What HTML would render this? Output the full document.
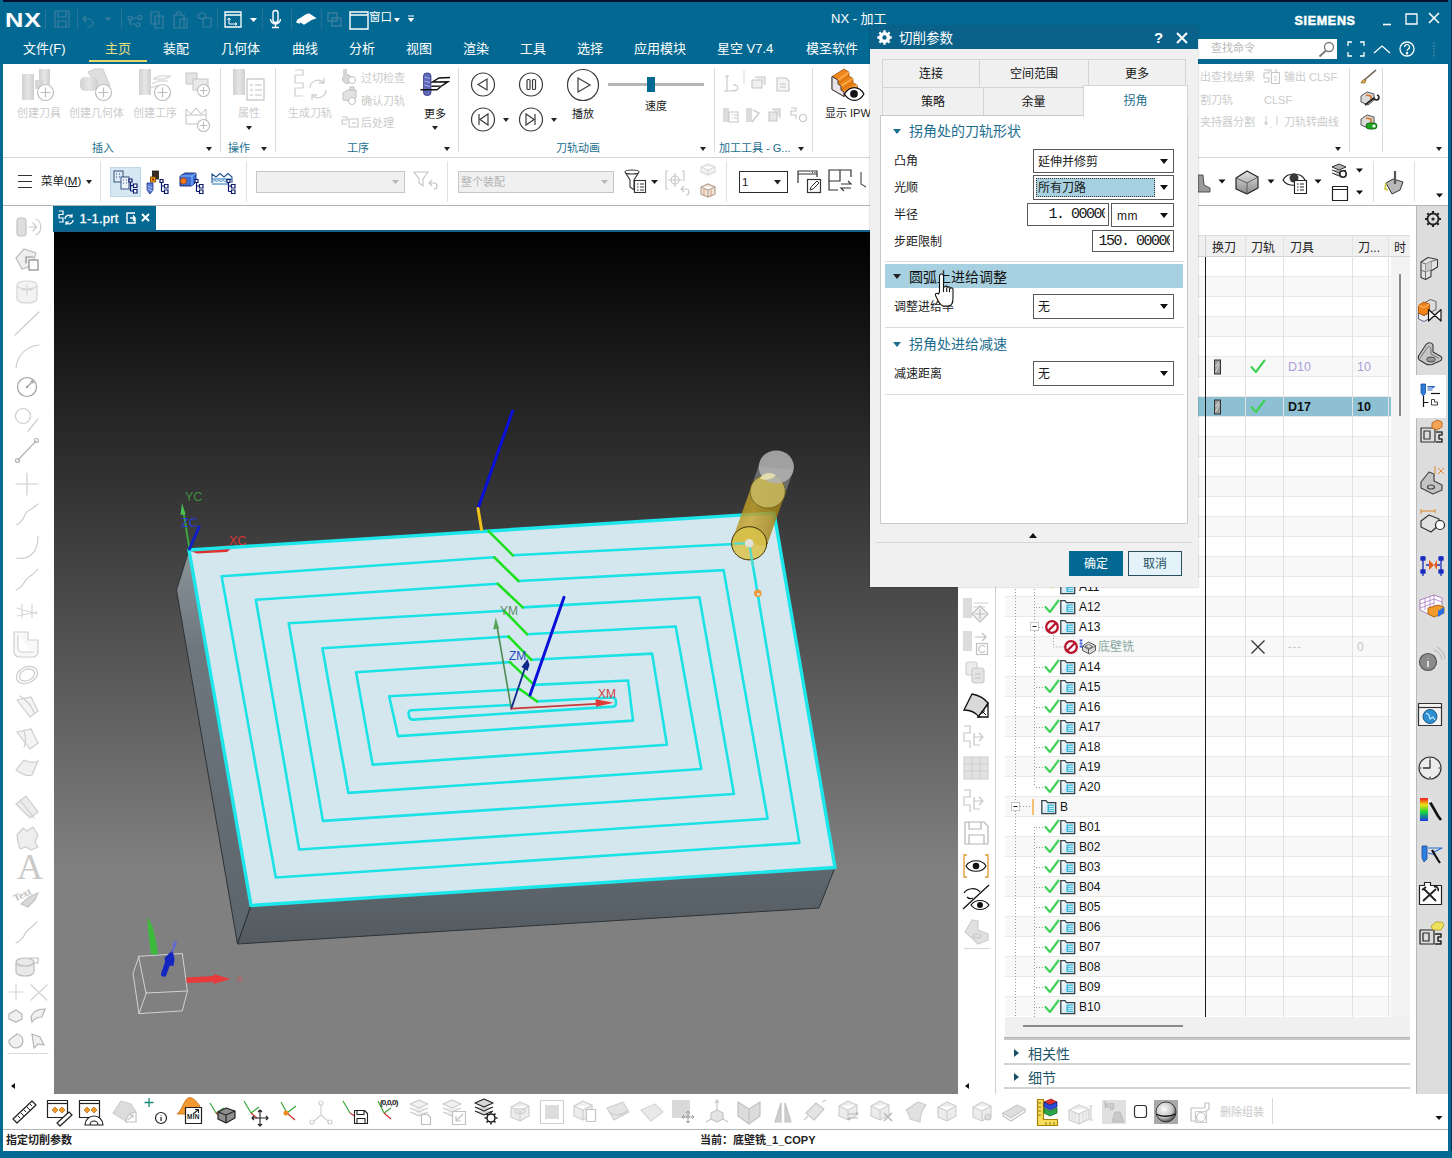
<!DOCTYPE html>
<html lang="zh-CN">
<head>
<meta charset="utf-8">
<title>NX - 加工</title>
<style>
*{box-sizing:border-box;margin:0;padding:0}
html,body{width:1452px;height:1158px;overflow:hidden;background:#fff}
body{position:relative;font-family:"Liberation Sans","Noto Sans CJK SC",sans-serif;font-size:12px;color:#1a1a1a}
.a{position:absolute}
.t{position:absolute;white-space:nowrap;line-height:1}
svg{position:absolute;overflow:visible}
.teal{background:#036993}
.w{color:#fff}
.dis{color:#cbcbcb}
.grp{color:#1b6e8e;font-size:12px}
.vs{position:absolute;width:1px;background:#dcdcdc}
.hs{position:absolute;height:1px;background:#d9d9d9}
.arr{position:absolute;width:0;height:0;border-left:3.5px solid transparent;border-right:3.5px solid transparent;border-top:4px solid #222}
#dlg{font-size:12px}
#dlg .tab{background:#f0f0f0;border:1px solid #d4d4d4;text-align:center;line-height:29px;font-size:12px;color:#111}
#dlg .tri{position:absolute;width:0;height:0;border-left:4.500px solid transparent;border-right:4.500px solid transparent;border-top:5px solid #1b6e8e}
#dlg .cb{background:#fff;border:1px solid #5a5a5a}
#dlg .cb span{position:absolute;top:6px;line-height:1;white-space:nowrap;font-size:12px}
#dlg .cb i{position:absolute;right:5px;top:9px;width:0;height:0;border-left:4px solid transparent;border-right:4px solid transparent;border-top:5px solid #111}
#dlg .cb b{position:absolute;left:2px;top:2px;width:119px;height:19px;background:#a7d0e0;outline:1px dotted #333;outline-offset:-1px}
#dlg .cb .num{font-family:"Liberation Mono","Noto Sans CJK SC",monospace;font-size:15px;top:3px;letter-spacing:-1.500px}
#dlg .cb .num u{text-decoration:none;display:inline-block;width:4px;overflow:hidden;vertical-align:top}
</style>
</head>
<body>
<!-- window frame -->
<div class="a teal" style="left:0;top:0;width:1452px;height:64px"></div>
<div class="a" style="left:0;top:0;width:1452px;height:1.500px;background:#04102e"></div>
<div class="a teal" style="left:0;top:0;width:3px;height:1158px"></div>
<div class="a teal" style="left:1448px;top:0;width:4px;height:1158px"></div>
<div class="a" style="left:1451px;top:0;width:1px;height:1158px;background:#0a3358"></div>
<div class="a teal" style="left:0;top:1151px;width:1452px;height:7px"></div>

<!-- title row -->
<div class="t w" style="left:5.300px;top:9px;font-size:21px;font-weight:bold;letter-spacing:.5px;transform:scaleX(1.21);transform-origin:left center">NX</div>
<div class="a" style="left:45px;top:9px;width:1px;height:20px;background:#2a7397"></div>
<svg style="left:50px;top:8px" width="400" height="26" viewBox="0 0 400 26" fill="none" stroke="#3d7f9f" stroke-width="1.2">
  <path d="M5 3h14v16H5zM8 3v6h8V3M8 19v-6h8v6"/>
  <path d="M36 8l-3 3 3 3M33 11h6a4 4 0 0 1 0 8h-2"/>
  <path d="M56 10l2 2 2-2z" fill="#3d7f9f"/>
  <path d="M78 10a2 2 0 1 0 4 0a2 2 0 1 0-4 0M82 10h6a2 2 0 1 0 0-1M80 12v4h6a2 2 0 1 0 1-1"/>
  <path d="M101 4h8v12h-8zM105 8h8v12h-8z"/>
  <path d="M124 7h10v13h-10zM127 7V4h4v3M130 11h7v9h-7z"/>
  <path d="M148 8a4 3 0 1 0 8 0a4 3 0 1 0-8 0M153 10h8v9h-8z"/>
</svg>
<div class="a" style="left:77px;top:9px;width:1px;height:20px;background:#2a7397"></div>
<div class="a" style="left:121px;top:9px;width:1px;height:20px;background:#2a7397"></div>
<div class="a" style="left:217px;top:9px;width:1px;height:20px;background:#2a7397"></div>
<div class="a" style="left:262px;top:9px;width:1px;height:20px;background:#2a7397"></div>
<div class="a" style="left:291px;top:9px;width:1px;height:20px;background:#2a7397"></div>
<div class="a" style="left:321px;top:9px;width:1px;height:20px;background:#2a7397"></div>
<svg style="left:222px;top:8px" width="200" height="26" viewBox="0 0 200 26" fill="none" stroke="#fff" stroke-width="1.3">
  <path d="M3 4h16v15H3zM3 7h16"/>
  <path d="M7 10v6h8M7 10l-1.5 2M7 10l1.500 2M15 16l-2-1.500M15 16l-2 1.500" stroke-width="1"/>
  <path d="M28 10l3.500 4 3.500-4z" fill="#fff" stroke="none"/>
  <path d="M51 5a2.500 2.500 0 0 1 5 0v7a2.500 2.500 0 0 1-5 0zM48.500 11a5 5 0 0 0 10 0M53.500 16v3.500M50 19.500h7" stroke-width="1.4"/>
  <path d="M76 12l8-5 6 4-8 5zM84 7l3-1 6 4-3 1M76 12l-1 2 3 1" stroke-width="1.4" fill="#fff"/>
  <path d="M106 5h9v8h-9zM110 10h9v8h-9z" stroke="#3d7f9f"/>
  <path d="M128 4h18v17h-18zM128 7h18" stroke-width="1.4"/>
  <path d="M172 10l3 4 3-4z" fill="#fff" stroke="none"/>
  <path d="M186 8h6M186.500 10.500l2.500 3 2.500-3z" fill="#fff" stroke-width="1"/>
</svg>
<div class="t w" style="left:369px;top:12px;font-size:11.500px">窗口</div>
<div class="t w" style="left:831px;top:12px;font-size:13px">NX - 加工</div>
<div class="t w" style="left:1294.500px;top:15px;font-size:12.500px;font-weight:bold;letter-spacing:0.700px;-webkit-text-stroke:0.5px #fff">SIEMENS</div>
<svg style="left:1380px;top:8px" width="60" height="22" viewBox="0 0 60 22" fill="none" stroke="#fff" stroke-width="1.6">
  <path d="M3 16.500h8"/>
  <path d="M26 6h11v10H26z" stroke-width="1.3"/>
  <path d="M49 5l10 10M59 5l-10 10"/>
</svg>

<!-- menu row -->
<div class="t w" style="left:23px;top:42px;font-size:13px">文件(F)</div>
<div class="t" style="left:105px;top:42px;font-size:13px;color:#e9df7c">主页</div>
<div class="a" style="left:89px;top:60px;width:58px;height:2px;background:#e3d76a"></div>
<div class="t w" style="left:163px;top:42px;font-size:13px">装配</div>
<div class="t w" style="left:221px;top:42px;font-size:13px">几何体</div>
<div class="t w" style="left:292px;top:42px;font-size:13px">曲线</div>
<div class="t w" style="left:349px;top:42px;font-size:13px">分析</div>
<div class="t w" style="left:406px;top:42px;font-size:13px">视图</div>
<div class="t w" style="left:463px;top:42px;font-size:13px">渲染</div>
<div class="t w" style="left:520px;top:42px;font-size:13px">工具</div>
<div class="t w" style="left:577px;top:42px;font-size:13px">选择</div>
<div class="t w" style="left:634px;top:42px;font-size:13px">应用模块</div>
<div class="t w" style="left:717px;top:42px;font-size:13px">星空 V7.4</div>
<div class="t w" style="left:806px;top:42px;font-size:13px">模圣软件</div>

<!-- search box + right icons -->
<div class="a" style="left:1197px;top:39px;width:140px;height:20px;background:#fff"></div>
<div class="t" style="left:1211px;top:43px;font-size:11px;color:#b9b9b9">查找命令</div>
<svg style="left:1316px;top:40px" width="130" height="20" viewBox="0 0 130 20" fill="none" stroke="#fff" stroke-width="1.3">
  <circle cx="13" cy="7" r="4.500" stroke="#777"/><path d="M10 10.500L3.500 16.500" stroke="#777" stroke-width="1.8"/>
  <path d="M32 6V2h4M44 2h4v4M48 12v4h-4M36 16h-4v-4"/>
  <path d="M58 13l8-7 8 7"/>
  <circle cx="91" cy="9" r="7"/><path d="M88.500 7a2.500 2.500 0 1 1 3.500 2.300c-1 .5-1 1-1 2" stroke-width="1.2"/><circle cx="91" cy="13.300" r=".6" fill="#fff"/>
  <path d="M118 2v16" stroke="#2d789c" stroke-width="2" stroke-dasharray="2 1"/>
</svg>
<!-- ribbon -->
<div class="hs" style="left:3px;top:157px;width:1445px;background:#d4d4d4"></div>
<svg style="left:0;top:64px" width="870" height="94" viewBox="0 64 870 94" fill="none" stroke="#c9c9c9" stroke-width="1">
  <defs>
    <linearGradient id="gd" x1="0" x2="1"><stop offset="0" stop-color="#d0d0d0"/><stop offset=".5" stop-color="#e6e6e6"/><stop offset="1" stop-color="#cfcfcf"/></linearGradient>
    <g id="plus"><circle r="8" fill="#fff" stroke="#bdbdbd" stroke-width="1.2"/><path d="M-5 0h10M0-5v10" stroke="#bdbdbd" stroke-width="1.2"/></g>
    <g id="plusS"><circle r="6" fill="#fff" stroke="#bdbdbd" stroke-width="1.1"/><path d="M-3.500 0h7M0-3.500v7" stroke="#bdbdbd" stroke-width="1.100"/></g>
  </defs>
  <!-- 创建刀具 -->
  <rect x="39" y="69" width="11" height="20" fill="url(#gd)" stroke="none"/>
  <rect x="35" y="80" width="8" height="9" fill="#d6d6d6" stroke="none"/>
  <rect x="22" y="74" width="12" height="26" rx="1" fill="url(#gd)" stroke="none"/>
  <use href="#plus" x="45.500" y="92.500"/>
  <!-- 创建几何体 -->
  <path d="M95 69l8 0 7 17-8 8-14-22z" fill="#dedede" stroke="#cfcfcf"/>
  <rect x="80" y="77" width="18" height="14" rx="5" fill="url(#gd)" stroke="none"/>
  <use href="#plus" x="103.500" y="92.500"/>
  <!-- 创建工序 -->
  <rect x="139" y="69" width="12" height="26" rx="1" fill="url(#gd)" stroke="none"/>
  <path d="M153 79l6-3h12l-6 3zM152 84l6-3h10M151 88l5-2h8" stroke="#cdcdcd"/>
  <use href="#plus" x="162.500" y="92.500"/>
  <!-- small two -->
  <rect x="186" y="73" width="11" height="11" fill="#e4e4e4" stroke="#c6c6c6"/><rect x="193" y="79" width="15" height="11" fill="#e9e9e9" stroke="#c6c6c6"/>
  <use href="#plusS" x="203.500" y="90.500"/>
  <path d="M186 124v-15l5 5 5-6 5 6 5-5v15M186 115h20M186 124h14" stroke="#c2c2c2"/>
  <use href="#plusS" x="203.500" y="125.500"/>
  <!-- 属性 -->
  <rect x="233" y="69" width="12" height="26" rx="1" fill="url(#gd)" stroke="none"/>
  <rect x="247" y="79" width="17" height="21" fill="#fff" stroke="#c2c2c2" stroke-width="1.2"/>
  <path d="M250 85h3M255 85h7M250 90h3M255 90h7M250 95h3M255 95h7" stroke="#c2c2c2" stroke-width="1.2"/>
  <!-- 生成刀轨 -->
  <path d="M295 70h8v5h-8v8h8v5h-8v8h8" stroke="#cfcfcf" stroke-width="1.200"/>
  <path d="M310 88a8 8 0 0 1 14-5M326 90a8 8 0 0 1-14 5M324 78v5h-5M312 100v-5h5" stroke="#cfcfcf" stroke-width="1.300"/>
  <!-- small three -->
  <circle cx="347" cy="79" r="4.500" fill="#dadada" stroke="#c4c4c4"/><rect x="343" y="69" width="4" height="8" fill="#d5d5d5" stroke="none"/><circle cx="352" cy="80" r="3.500" fill="#fff" stroke="#c0c0c0"/>
  <path d="M343 100v-7l5-3h8v8l-4 3zM350 91v-4h4v4" fill="#e2e2e2" stroke="#c0c0c0"/><circle cx="352" cy="101" r="3.500" fill="#fff" stroke="#c0c0c0"/>
  <path d="M342 117h5v3h-5v4h5M349 119h9v8h-9zM352 123h4" stroke="#c6c6c6" stroke-width="1.100"/>
  <!-- 更多 icon -->
  <rect x="423.500" y="73" width="7.500" height="22.500" rx="3" fill="#6068b8" stroke="#2a2f7c" stroke-width=".7"/>
  <path d="M424.500 77l5.500 1.500M424.500 81l5.500 1.500M424.500 85l5.500 1.500M424.500 89l5.500 1.500" stroke="#a8aee8" stroke-width="1"/>
  <path d="M450 77.500L439 78L432.500 82L448 81.700L441.500 86L431.500 86.200M420.500 89.700L437 89.700L441.500 86" stroke="#111" stroke-width="1.400" fill="none" stroke-linejoin="miter"/>
  <!-- animation buttons -->
  <g stroke="#3c3c3c" stroke-width="1.200" fill="#fff">
    <circle cx="483" cy="84.500" r="11.500"/><path d="M487 79v11l-9-5.500z"/>
    <circle cx="531" cy="84.500" r="11.500"/><rect x="527" y="79.500" width="3" height="10" rx="1"/><rect x="532.500" y="79.500" width="3" height="10" rx="1"/>
    <circle cx="583" cy="85" r="15.500"/><path d="M578 78v14l12-7z"/>
    <circle cx="483" cy="119.500" r="11.500"/><path d="M488 114v11l-8-5.500zM479 114v11"/>
    <circle cx="531" cy="119.500" r="11.500"/><path d="M526 114v11l8-5.500zM535 114v11"/>
  </g>
  <rect x="608" y="83" width="96" height="3" fill="#b5b5b5" stroke="none"/>
  <rect x="647" y="77" width="8" height="15" fill="#036993" stroke="none"/>
  <!-- 加工工具 icons -->
  <g stroke="#c6c6c6" stroke-width="1.1">
    <path d="M725 76h4M727 76v15M724 91h7M731 90a4 3 0 1 0 2-5"/>
    <path d="M744 70v14" stroke="#dcdcdc"/>
    <path d="M752 80h10v8h-10zM755 77h10v8" fill="#f0f0f0"/>
    <path d="M777 78h9l3 3v10h-12zM780 84h6M780 87h6" fill="#f4f4f4"/>
    <rect x="723" y="108" width="6" height="14" fill="#dcdcdc" stroke="none"/><path d="M729 112h9v10h-9zM732 115h1M734 115h3M732 118h1M734 118h3" />
    <rect x="746" y="108" width="6" height="14" fill="#dcdcdc" stroke="none"/><path d="M753 110l6 3-7 9" stroke-width="1.600" stroke="#cfcfcf"/>
    <path d="M769 112h8v9h-8zM772 109h8v9" fill="#e6e6e6"/>
    <path d="M791 108h5v3h-5v4h5v4"/><circle cx="803" cy="118" r="3.500"/>
  </g>
  <!-- 显示 IPW icon -->
  <path d="M832 76.500L844 69l5 3v4l4 2.500v4l4.500 3v3L844 96.500L832 89.500z" fill="#ee861a" stroke="#7a3a00" stroke-width=".6"/>
  <path d="M832 76.500l6 3.500v4l3 2v4l3 2v4.500L832 89.500z" fill="#e9e2e6" stroke="#222" stroke-width=".9"/>
  <path d="M838 80l11-8M841 86l12-7.500M844 92l13.500-6.500" stroke="#ffb257" stroke-width="1.400"/>
  <path d="M838 84l11-8M841 90l12-7.500" stroke="#c96a0a" stroke-width="1"/>
  <path d="M844.400 94c5-8.500 15-8.500 19.500 0-4.500 8.500-14.500 8.500-19.500 0z" fill="#fff" stroke="#111" stroke-width="1.300"/><circle cx="854" cy="93.800" r="3.900" fill="#14141a" stroke="none"/>
</svg>
<div class="t dis" style="left:17px;top:108px;font-size:11px">创建刀具</div>
<div class="t dis" style="left:69px;top:108px;font-size:11px">创建几何体</div>
<div class="t dis" style="left:133px;top:108px;font-size:11px">创建工序</div>
<div class="t dis" style="left:238px;top:108px;font-size:11px">属性</div>
<div class="t dis" style="left:288px;top:108px;font-size:11px">生成刀轨</div>
<div class="t dis" style="left:361px;top:73px;font-size:11px">过切检查</div>
<div class="t dis" style="left:361px;top:96px;font-size:11px">确认刀轨</div>
<div class="t dis" style="left:361px;top:118px;font-size:11px">后处理</div>
<div class="t" style="left:424px;top:109px;font-size:11px">更多</div>
<div class="t" style="left:572px;top:109px;font-size:11px">播放</div>
<div class="t" style="left:645px;top:101px;font-size:11px">速度</div>
<div class="t" style="left:825px;top:108px;font-size:11px">显示 IPW</div>
<div class="t grp" style="left:92px;top:142.500px;font-size:11px">插入</div>
<div class="t grp" style="left:228px;top:142.500px;font-size:11px">操作</div>
<div class="t grp" style="left:347px;top:142.500px;font-size:11px">工序</div>
<div class="t grp" style="left:556px;top:142.500px;font-size:11px">刀轨动画</div>
<div class="t grp" style="left:719px;top:142.500px;font-size:11px">加工工具 - G...</div>
<div class="arr" style="left:206px;top:147px"></div>
<div class="arr" style="left:261px;top:147px"></div>
<div class="arr" style="left:444px;top:147px"></div>
<div class="arr" style="left:700px;top:147px"></div>
<div class="arr" style="left:798px;top:147px"></div>
<div class="arr" style="left:246px;top:126px"></div>
<div class="arr" style="left:432px;top:126px"></div>
<div class="arr" style="left:503px;top:118px"></div>
<div class="arr" style="left:551px;top:118px"></div>
<div class="vs" style="left:220px;top:68px;height:84px"></div>
<div class="vs" style="left:275px;top:68px;height:84px"></div>
<div class="vs" style="left:458px;top:68px;height:84px"></div>
<div class="vs" style="left:714px;top:68px;height:84px"></div>
<div class="vs" style="left:812px;top:68px;height:84px"></div>
<!-- toolbar row 2 -->
<div class="hs" style="left:3px;top:205px;width:1445px;background:#b4b4b4"></div>
<svg style="left:0;top:158px" width="870" height="47" viewBox="0 158 870 47" fill="none" stroke="#222" stroke-width="1.200">
  <path d="M18 175.500h14M18 181.500h14M18 187.500h14" stroke="#333" stroke-width="1.100"/>
  <rect x="110.500" y="167.500" width="30" height="29" fill="#d5e7f2" stroke="#bcd8e7" stroke-width="1"/>
  <defs>
    <g id="tree3"><path d="M0 0h3v3h-3zM1.500 3v9M1.500 6.500h3M4.500 5h3.500v3.500h-3.500zM1.500 12h3M4.500 10.500h3.500v3.500h-3.500z" stroke="#0b1a6a" stroke-width="1.200" fill="#fff"/></g>
  </defs>
  <!-- prog order -->
  <rect x="114" y="171" width="9" height="11" fill="#dfe8f5" stroke="#33507e" stroke-width="1"/>
  <path d="M116 174h1M119 174h1M116 177h1M119 177h1" stroke="#33507e"/>
  <rect x="121" y="177" width="8" height="12" fill="#eef3fb" stroke="#33507e" stroke-width="1"/>
  <path d="M123 180h1M126 180h1M123 183h1M126 183h1" stroke="#33507e"/>
  <use href="#tree3" x="129" y="179"/>
  <!-- machine tool -->
  <rect x="152.500" y="171" width="6" height="8" fill="#3a2a22" stroke="#1a1a1a" stroke-width=".8"/>
  <rect x="150.500" y="177" width="5" height="5" fill="#f6a200" stroke="#7a3d00" stroke-width=".8"/><circle cx="153" cy="179.500" r="1" fill="#7a1010" stroke="none"/>
  <path d="M147 183h6v7l-3 4-3-4z" fill="#5a7fd8" stroke="#1d2f80" stroke-width=".8"/><path d="M147.500 186l5 2M147.500 189l5 2" stroke="#b8c8f8" stroke-width=".8"/>
  <use href="#tree3" x="160" y="179.500"/>
  <!-- geometry -->
  <path d="M180 176l5-3h11v9l-4 4h-12z" fill="#3d70d6" stroke="#12226a" stroke-width=".9"/>
  <path d="M180 176h12l4-3M192 176v10" stroke="#9cc1ff" stroke-width=".9"/>
  <circle cx="183.500" cy="181" r="3" fill="#ff7a1a" stroke="#a43a00" stroke-width=".8"/>
  <use href="#tree3" x="195" y="179.500"/>
  <!-- method -->
  <path d="M212 183v-9l4 3 4-3.500 4 3.500 4-3.500 4 3.500v6" stroke="#20508d" stroke-width="1.100"/>
  <path d="M212 179h20M212 184h16" stroke="#1d6fb8" stroke-width="1.200"/>
  <path d="M213 181.500l2-1 2 1 2-1 2 1 2-1 2 1 2-1 2 1" stroke="#1d6fb8" stroke-width=".8"/>
  <use href="#tree3" x="227" y="179.500"/>
  <!-- combos -->
  <rect x="256.500" y="171.500" width="148" height="21" fill="#f0f0f0" stroke="#c6c6c6" stroke-width="1"/>
  <path d="M392 180l3.500 4 3.500-4z" fill="#b5b5b5" stroke="none"/>
  <path d="M414 172h14l-5 7v7l-4-3v-4zM432 180l-3 3 3 3M429 183h5a3 3 0 0 1 0 6" stroke="#c3c3c3" stroke-width="1.100"/>
  <rect x="458.500" y="171.500" width="155" height="21" fill="#f0f0f0" stroke="#c6c6c6" stroke-width="1"/>
  <path d="M601 180l3.500 4 3.500-4z" fill="#b5b5b5" stroke="none"/>
  <!-- filter icon -->
  <path d="M625 172a7 2 0 1 0 14 0a7 2 0 1 0-14 0M625 172l5 8v7l4 3v-10l5-8" stroke="#333" stroke-width="1.100" fill="#fff"/>
  <rect x="634.500" y="180.500" width="11" height="12" fill="#fff" stroke="#333" stroke-width="1.100"/>
  <path d="M637 184h1.500M640 184h4M637 187h1.500M640 187h4M637 190h1.500M640 190h4" stroke="#333" stroke-width="1.100"/>
  <path d="M651 180l3.500 4 3.500-4z" fill="#222" stroke="none"/>
  <!-- snap icon -->
  <path d="M668 171h-2v18h2M682 171h2v10" stroke="#c9c9c9"/><circle cx="675" cy="180" r="4" stroke="#c9c9c9"/><path d="M675 173v14M668 180h14" stroke="#c9c9c9"/>
  <path d="M684 186l-3 3 3 3M681 189h5a3 3 0 0 1 0 6" stroke="#c9c9c9"/>
  <path d="M701 167l7-3 7 3v5l-7 3-7-3zM701 167l7 3 7-3M708 170v5" stroke="#dcdcdc" fill="#f1f1f1"/>
  <path d="M701 187l7-3 7 3v7l-7 3-7-3zM701 187l7 3 7-3M708 190v7" stroke="#b9a492" fill="#f0e6dc"/>
  <path d="M704 189v7M711 190v6" stroke="#d38a5a" stroke-width=".8"/>
  <!-- combo 1 -->
  <rect x="739.500" y="171.500" width="48" height="21" fill="#fff" stroke="#2b2b2b" stroke-width="1"/>
  <path d="M774 180l3.500 4.500 3.500-4.500z" fill="#222" stroke="none"/>
  <!-- two window icons -->
  <path d="M798 183v-12h19v6M798 174h19" stroke="#333"/><path d="M812 172.500h1M814.500 172.500h1" stroke="#333"/>
  <rect x="807.500" y="179.500" width="13" height="13" fill="#fff" stroke="#333"/><path d="M810 190l1-3 6-6 2 2-6 6z" fill="#fff" stroke="#333" stroke-width="1"/>
  <path d="M829 170h11v11h-11zM840 170h11v7M829 181v9h9M840 177v4" stroke="#333"/>
  <path d="M841 184h10l-3-3M851 188h-10l3 3" stroke="#333"/>
  <path d="M861 172v12l5 3" stroke="#555"/>
</svg>
<div class="t" style="left:41px;top:176px;font-size:11.500px">菜单(<span style="text-decoration:underline">M</span>)</div>
<div class="arr" style="left:86px;top:180px"></div>
<div class="t" style="left:461px;top:177px;font-size:11px;color:#b4b4b4">整个装配</div>
<div class="t" style="left:742px;top:177px;font-size:11.500px">1</div>
<div class="vs" style="left:100px;top:161px;height:41px;background:#e0e0e0"></div>
<div class="vs" style="left:246px;top:161px;height:41px;background:#e0e0e0"></div>
<div class="vs" style="left:447px;top:161px;height:41px;background:#e0e0e0"></div>
<div class="vs" style="left:726px;top:161px;height:41px;background:#e0e0e0"></div>

<!-- tab row -->
<div class="a teal" style="left:53px;top:206px;width:103px;height:26px"></div>
<div class="a teal" style="left:53px;top:230px;width:905px;height:2px;background:#15608a"></div>
<svg style="left:56px;top:208px" width="100" height="20" viewBox="0 0 100 20" fill="none" stroke="#fff" stroke-width="1.200">
  <path d="M3 3h4v3.500H3V10h4v4H3"/>
  <path d="M9 11a4 4 0 0 1 7-2.500M17 12a4 4 0 0 1-7 2.500M16 6v3h-3M10 17v-3h3" stroke-width="1.200"/>
  <path d="M76 5h-5v10h8v-4M74 10h5l-2-2.500M79 10l-2 2.500M75 5h4" stroke-width="1.400"/>
  <path d="M86 6l7 7M93 6l-7 7" stroke-width="2"/>
</svg>
<div class="t w" style="left:79.500px;top:211.500px;font-size:13px;-webkit-text-stroke:.3px #fff;letter-spacing:.2px">1-1.prt</div>
<!-- right part of ribbon / toolbar (beyond dialog) -->
<div class="t dis" style="left:1200px;top:72px;font-size:11px">出查找结果</div>
<div class="t dis" style="left:1200px;top:95px;font-size:11px">割刀轨</div>
<div class="t dis" style="left:1200px;top:117px;font-size:11px">夹持器分割</div>
<div class="t dis" style="left:1284px;top:72px;font-size:11px">输出 CLSF</div>
<div class="t dis" style="left:1264px;top:95px;font-size:11px">CLSF</div>
<div class="t dis" style="left:1284px;top:117px;font-size:11px">刀轨转曲线</div>
<div class="vs" style="left:1349px;top:68px;height:84px"></div>
<div class="vs" style="left:1382px;top:68px;height:84px"></div>
<div class="arr" style="left:1335px;top:147px"></div>
<div class="arr" style="left:1436px;top:147px"></div>
<svg style="left:1197px;top:64px" width="251" height="142" viewBox="1197 64 251 142" fill="none" stroke="#c6c6c6" stroke-width="1.100" stroke-linejoin="round">
  <path d="M1264 70h5v3h-5v5h5v4h-5M1271 72v-3M1276 72v-3M1271.500 72.500h8v11h-8zM1274 77h3M1274 80h3" />
  <path d="M1266 116v9l-1.500-3M1266 125l1.500-3M1277 116v9M1271 127v1" stroke="#cfcfcf"/>
  <!-- 3 color icons -->
  <path d="M1362 82l14-12" stroke="#6a5a4a" stroke-width="1.600"/><path d="M1361 83c1-3 3-4 5-3l-1 3z" fill="#d8a850" stroke="#8a6a20" stroke-width=".7"/>
  <path d="M1361 96l6-4 7 2v6l-6 5-7-3z" fill="#d9d9d9" stroke="#444" stroke-width=".9"/><path d="M1366 95l5 1v4" stroke="#d8742a" stroke-width="1.600"/><path d="M1365 105l9-7a2.500 2.500 0 1 0 3-3" stroke="#222" stroke-width="1.600"/>
  <path d="M1361 119l6-4 7 2v6l-6 5-7-3z" fill="#d9d9d9" stroke="#444" stroke-width=".9"/><path d="M1366 118l5 1v4" stroke="#d8742a" stroke-width="1.600"/><rect x="1366" y="123" width="11" height="6" rx="3" fill="#1fa81f" stroke="#0a5a0a" stroke-width=".8"/><circle cx="1374" cy="126" r="1.600" fill="#fff" stroke="none"/>
  <!-- toolbar 2 -->
  <path d="M1198 175h5l1 10 6 3v4h-12z" fill="#9a9a9a" stroke="#444" stroke-width=".9"/>
  <path d="M1218.500 179.500l3.500 4 3.500-4z" fill="#111" stroke="none"/>
  <defs><linearGradient id="cg" x1="0" y1="0" x2="0" y2="1"><stop offset="0" stop-color="#e4e4e4"/><stop offset="1" stop-color="#8a8a8a"/></linearGradient></defs>
  <path d="M1236 178l11-7 11 6v11l-11 6-11-5z" fill="url(#cg)" stroke="#222" stroke-width="1.200"/><path d="M1236 178l11 5 11-6M1247 183v11" stroke="#555" stroke-width=".9"/>
  <path d="M1267.500 179.500l3.500 4 3.500-4z" fill="#111" stroke="none"/>
  <path d="M1283 180c4-8 18-8 22 0c-4 7-18 7-22 0z" fill="#fff" stroke="#222" stroke-width="1.200"/><circle cx="1294" cy="178" r="4.500" fill="#3a3a3a" stroke="none"/>
  <rect x="1294.500" y="180.500" width="12" height="13" fill="#fff" stroke="#222" stroke-width="1.100"/><path d="M1297 184h1.500M1300 184h4M1297 187h1.500M1300 187h4M1297 190h1.500M1300 190h4" stroke="#222" stroke-width="1.100"/>
  <path d="M1314.500 179.500l3.500 4 3.500-4z" fill="#111" stroke="none"/>
  <path d="M1332 167l7-3 7 3-7 3zM1332 170l7 3 7-3M1332 173l7 3 5-2" fill="#b5b5b5" stroke="#333" stroke-width="1"/><circle cx="1343" cy="174" r="3.200" fill="#fff" stroke="#222" stroke-width="1.600"/>
  <path d="M1356 168.500l3.500 4 3.500-4z" fill="#111" stroke="none"/>
  <path d="M1332.500 186.500h15v14h-15zM1332.500 189.500h15" fill="#fff" stroke="#222" stroke-width="1.200"/>
  <path d="M1356 190.500l3.500 4 3.500-4z" fill="#111" stroke="none"/>
  <path d="M1386 183l7-4 10 3-3 8-8 4z" fill="#b9b9b9" stroke="#333" stroke-width="1"/><path d="M1395 171v13" stroke="#555" stroke-width="2.200"/><path d="M1386 183l-1 6 3 1" stroke="#c8c030" stroke-width="1.600"/>
  <path d="M1436 193.500l3.500 4 3.500-4z" fill="#111" stroke="none"/>
</svg>
<div class="vs" style="left:1373px;top:161px;height:41px;background:#e0e0e0"></div>
<div class="vs" style="left:1414px;top:161px;height:41px;background:#e0e0e0"></div>
<!-- 3D viewport -->
<div class="a" style="left:54px;top:232px;width:904px;height:862px;background:linear-gradient(to bottom,#000 0px,#808080 636px,#808080 862px)"></div>
<svg style="left:54px;top:231px" width="905" height="862" viewBox="54 231 905 862" fill="none" stroke-linecap="round" stroke-linejoin="round">
  <defs>
    <linearGradient id="gfront" x1="0" y1="0" x2="0" y2="1"><stop offset="0" stop-color="#5f686e"/><stop offset="1" stop-color="#535b61"/></linearGradient>
    <linearGradient id="gleft" x1="0" y1="0" x2="0" y2="1"><stop offset="0" stop-color="#8a9398"/><stop offset=".25" stop-color="#6d777d"/><stop offset="1" stop-color="#5b646a"/></linearGradient>
    <linearGradient id="gtool" x1="0" y1="0" x2="1" y2="0.3"><stop offset="0" stop-color="#a98412"/><stop offset=".5" stop-color="#c7a52e"/><stop offset="1" stop-color="#9a7a10"/></linearGradient>
  </defs>
  <!-- plate -->
  <polygon points="189,550 176.500,590 237.500,944 251,905.500" fill="url(#gleft)" stroke="#2d3236" stroke-width="1"/>
  <polygon points="251,905.500 237.500,944 819,908 835,867.500" fill="url(#gfront)" stroke="#2d3236" stroke-width="1"/>
  <polygon points="189,550 774,513 835,867.500 251,905.500" fill="#d5e7ee"/>
  <!-- WCS at corner -->
  <path d="M189 550.500l38-5 6 1.500-6 5-30 1.500z" fill="#e03030" stroke="none"/>
  <polygon points="189,550 774,513 835,867.500 251,905.500" stroke="#1ce6ea" stroke-width="3.400"/>
  <!-- toolpath rings -->
  <g stroke="#1ce2e6" stroke-width="2.600">
    <polyline points="512.800,555.300 749.200,543.300 799.400,842.900 275.800,877.500 221.600,576.300 494.200,557.300"/>
    <polyline points="518.500,581 723.600,570.100 767.600,818.700 299.200,849.500 255.800,599.700 497.700,583.800"/>
    <polyline points="522.700,607.400 699.400,597.200 733.900,794 322.900,820.900 288.700,623.200 504.200,610.800"/>
    <polyline points="527,634.200 675.700,626.500 701.300,769 348.400,792.900 322.400,648.300 508.500,636.500"/>
    <polyline points="531.300,659.800 652.100,653.600 666.900,744.800 372.600,764.600 356.100,672.200 509.900,662.100"/>
    <polyline points="534.100,684.900 628.100,680.500 633,720.600 398.100,736.100 389.200,696.300 519.900,689.200"/>
    <path d="M537 701.400L612.500 697.500Q615.500 697.500 615.800 700.500L616 703.500Q616 706.300 613 706.600L413 719.600Q409.500 719.600 409 716L408.600 713.500Q408.400 710.500 411.500 710.300L511 705"/>
  </g>
  <!-- stepovers -->
  <g stroke="#1fe01f" stroke-width="2.600">
    <path d="M488.500 531.100L512.800 555.300"/>
    <path d="M494.200 557.300L518.500 581"/>
    <path d="M497.700 583.800L522.700 607.400"/>
    <path d="M504.200 610.800L527 634.200"/>
    <path d="M508.500 636.500L531.300 659.800"/>
    <path d="M509.900 662.100L534.100 684.900"/>
    <path d="M519.900 689.200L537 701.400"/>
  </g>
  <!-- approach / retract -->
  <path d="M512.600 411L478 508.500" stroke="#0a10d8" stroke-width="3"/>
  <path d="M478 508.500L481.500 529.500" stroke="#f2c21c" stroke-width="3"/>
  <path d="M564 597.300L530 695" stroke="#0a10d8" stroke-width="3"/>
  <!-- MCS -->
  <path d="M511.300 708.600L497 626" stroke="#4d8a4d" stroke-width="1.600"/>
  <path d="M495.700 617.500l-2.500 12 6-1z" fill="#5aa45a" stroke="none"/>
  <path d="M511.300 708.600L525 668" stroke="#102a8c" stroke-width="1.800"/>
  <path d="M527.500 659l-6 8 6 4 2-6z" fill="#102a8c" stroke="none"/>
  <path d="M511.300 708.600L596 703.800" stroke="#c43a3a" stroke-width="1.800"/>
  <path d="M613.500 702.800l-18-3.500 0.500 7.500z" fill="#e03a3a" stroke="none"/>
  <!-- tool -->
  <path d="M731.800 541L750.500 489a17.500 16.500 0 0 1 34.600 5L766.500 546.500z" fill="url(#gtool)" fill-opacity=".82" stroke="none"/>
  <ellipse cx="749.200" cy="543.300" rx="17.600" ry="16.600" fill="#d9c24a" fill-opacity=".85" stroke="#3a3208" stroke-width="1"/>
  <path d="M758.500 466L750.500 489a17.500 16.500 0 0 0 34.600 5L793.500 470z" fill="#9c9c9c" fill-opacity=".55" stroke="none"/>
  <ellipse cx="767.700" cy="491.500" rx="17.600" ry="16.600" fill="#c9b955" fill-opacity=".8" stroke="#6b5d1a" stroke-width=".8"/>
  <ellipse cx="776.300" cy="467" rx="17.600" ry="16.600" fill="#b4b4b4" fill-opacity=".85" stroke="none"/>
  <path d="M760 478a9 5 -15 0 0 16 -3a10 8 0 0 0 -16 3z" fill="#efe8b0" fill-opacity=".8" stroke="none"/>
  <path d="M735 543.500L749.200 543.300M749.200 543.300L753 566" stroke="#52dcd0" stroke-width="2.200"/>
  <circle cx="749.200" cy="543.300" r="4.300" fill="#e2e2d8" stroke="none"/>
  <circle cx="757.800" cy="593.200" r="3.800" fill="#ef9a3c" stroke="none"/><circle cx="758.300" cy="594.200" r="1.300" fill="#d8e8ee" stroke="none"/>
  <!-- WCS arrows -->
  <path d="M189.500 549L183.500 512" stroke="#3faa3f" stroke-width="1.800"/>
  <path d="M182 503l-1.500 12 5-1z" fill="#4fc04f" stroke="none"/>
  <path d="M189.500 549L199 527" stroke="#1020c8" stroke-width="3"/>
  <!-- triad -->
  <g stroke="#d2d2d2" stroke-width="1">
    <path d="M139 956.300L182.300 953.500L187.400 991L146.300 993z"/>
    <path d="M146.300 993L139 1013.600L182.300 1010.900L187.400 991"/>
    <path d="M139 956.300L133 973.400L139 1013.600"/>
  </g>
  <path d="M151 954.500l-3-24-0.500-14 5 10 3.500 14 2 14z" fill="#3cba3c" stroke="none"/>
  <path d="M163.800 974L168 962" stroke="#1426c0" stroke-width="5.500"/>
  <path d="M172.500 950l-8 8 1 7 8 1 1-7z" fill="#1426c0" stroke="none"/>
  <path d="M172 952l4-9" stroke="#5a66e8" stroke-width="1.500"/>
  <path d="M186.500 983l0-5.500 27-1.500 0-2 17 5-17 5 0-2z" fill="#e83a3a" stroke="none"/>
  <g font-family="Liberation Sans, sans-serif" stroke="none">
    <text x="185" y="501" font-size="12.500" fill="#3f8f3f">YC</text>
    <text x="181" y="527" font-size="12.500" fill="#2a3cd0">ZC</text>
    <text x="229" y="545" font-size="12.500" fill="#d83434">XC</text>
    <text x="500" y="615" font-size="12" fill="#5e8e66">YM</text>
    <text x="509" y="660" font-size="12" fill="#2848c0">ZM</text>
    <text x="598" y="698" font-size="12" fill="#d04040">XM</text>
    <text x="236.500" y="982" font-size="9" fill="#c85a5a">X</text>
    <text x="172" y="946" font-size="8" fill="#5a66e8">Z</text>
  </g>
</svg>
<!-- left toolbar -->
<svg style="left:3px;top:206px" width="51" height="890" viewBox="3 206 51 890" fill="none" stroke="#cdcdcd" stroke-width="1.200" stroke-linecap="round">
  <rect x="17" y="218" width="9" height="18" rx="3" fill="#dedede" stroke="#c4c4c4"/><path d="M29 227h7M33 223l3.500 4-3.500 4M36 219a9 9 0 0 1 0 16"/>
  <path d="M16 258l8-9 12 4-4 13-10 3z" fill="#eeeeee" stroke="#bdbdbd"/><rect x="29" y="260" width="9" height="10" fill="#fff" stroke="#8a8a8a"/><path d="M26 263v-6h7" stroke="#8a8a8a"/>
  <path d="M17 285v14a10 4 0 0 0 20 0v-14a10 4 0 0 0-20 0a10 4 0 0 0 20 0M27 285v10M22 290h10" fill="#f3f3f3" stroke="#d6d6d6"/>
  <path d="M15 335l24-23"/>
  <path d="M16 368c1-12 10-22 23-23"/>
  <circle cx="27" cy="387" r="9.500" stroke="#a0a0a0"/><path d="M27 387l6-6M31 381h2v2" stroke="#a0a0a0"/><circle cx="27" cy="387" r="1.200" fill="#a0a0a0" stroke="none"/>
  <circle cx="23" cy="416" r="7.500"/><path d="M28 431l10-12"/>
  <path d="M18 460l18-19" stroke="#b5b5b5"/><circle cx="17.500" cy="460.500" r="2" stroke="#b5b5b5"/><circle cx="36.500" cy="440.500" r="2" stroke="#b5b5b5"/>
  <path d="M27 473v22M16 484h22"/>
  <path d="M16 525c8-2 8-12 12-14s6-4 10-7"/>
  <path d="M16 558c12 2 22-4 22-22"/>
  <path d="M16 590c8-3 8-10 13-13s6-4 9-8"/>
  <path d="M17 608l20 6M17 616l20-4M22 604v14M32 604v14" stroke="#d6d6d6"/>
  <path d="M14 632h14v8h10v12a5 5 0 0 1-5 5H19a5 5 0 0 1-5-5zM18 636v12a4 4 0 0 0 4 4h11" fill="#f8f8f8" stroke="#cfcfcf"/>
  <ellipse cx="27" cy="675" rx="11" ry="8" transform="rotate(-25 27 675)"/><ellipse cx="27" cy="675" rx="8" ry="5.500" transform="rotate(-25 27 675)"/>
  <path d="M17 700l14-3 7 14-8 6zM20 696c6 4 12 10 14 17" fill="#f4f4f4"/>
  <path d="M17 732l14-3 7 14-8 6zM24 731c2 6 2 12 0 16" fill="#f4f4f4"/>
  <path d="M16 770l8-10c6 3 10 3 14 1l-6 14c-5 2-10-1-16-5z" fill="#f0f0f0"/>
  <path d="M16 804l10-8 12 16-8 6zM20 800l14 18" fill="#ececec"/>
  <path d="M17 835l6-7 4 3 6-4 5 8-3 7 3 5-7 3-5-3-6 2-2-7z" fill="#eeeeee"/>
  <path d="M21 904l8-7 9-4-3 7-7 7z" fill="#d8d8d8" stroke="#c6c6c6"/>
  <path d="M16 943c8-3 8-10 12-13s6-5 9-8"/>
  <path d="M16 962v10a9 4 0 0 0 18 0v-10a9 4 0 0 0-18 0a9 4 0 0 0 18 0" fill="#e9e9e9" stroke="#bdbdbd"/><path d="M30 958h8v5h-5" stroke="#bdbdbd"/>
  <path d="M16 984v16M9 992h14M31 985l16 15M47 985l-16 15" stroke="#d2d2d2"/>
  <path d="M9 1014l7-4 6 4v5l-6 3-7-3zM31 1017c2-6 8-8 14-8l-3 8c-4 0-8 2-10 5z" fill="#f0f0f0" stroke="#b5b5b5"/>
  <path d="M9 1040a7 7 0 1 0 8-6zM32 1034l8 3 4 8-6-1-4 4z" fill="#f0f0f0" stroke="#b5b5b5"/>
  <path d="M8 1053.500h40" stroke="#d9d9d9"/>
</svg>
<div class="t" style="left:17px;top:849px;font-size:36px;font-family:'Liberation Serif',serif;color:#c9c9c9">A</div>
<div class="t" style="left:13px;top:890px;font-size:10px;font-family:'Liberation Serif',serif;color:#bdbdbd;font-weight:bold;transform:rotate(-25deg)">Text</div>
<div class="a" style="left:11px;top:1083px;width:0;height:0;border-top:3.500px solid transparent;border-bottom:3.500px solid transparent;border-right:4px solid #111"></div>

<!-- middle toolbar -->
<div class="vs" style="left:995px;top:586px;height:508px;background:#d0d0d0"></div>
<svg style="left:959px;top:586px" width="36" height="510" viewBox="959 586 36 510" fill="none" stroke="#c6c6c6" stroke-width="1.200">
  <rect x="963" y="598" width="9" height="20" fill="#dcdcdc" stroke="none"/><path d="M974 603h14M973 607h12" stroke="#d0d0d0"/><path d="M980 606l8 8-8 8-8-8zM980 609v10M975 614h10" fill="#f1f1f1" stroke="#bdbdbd"/>
  <rect x="963" y="631" width="9" height="20" fill="#dcdcdc" stroke="none"/><path d="M975 637h10M982 633l4 4-4 4" stroke="#c0c0c0"/><rect x="976.500" y="643.500" width="11" height="11" fill="#fff" stroke="#c0c0c0"/><path d="M985 647a3.500 3.500 0 1 0 0 4" stroke="#c0c0c0"/>
  <rect x="966" y="662" width="11" height="13" rx="2" fill="#ececec" stroke="#d0d0d0"/><rect x="972" y="668" width="12" height="15" rx="3" fill="#e4e4e4" stroke="#cacaca"/><path d="M975 674h6M975 678h6" stroke="#c0c0c0"/>
  <path d="M964 710l8-16c6 1 12 4 16 9l-9 14c-3-4-9-7-15-7z" fill="#d9d9d9" stroke="#111" stroke-width="1.300"/>
  <path d="M978 717l10-13v13z" fill="#fff" stroke="#111" stroke-width="1.300"/><path d="M986 715l-4-4M982 714v-3h3" stroke="#111" stroke-width="1"/>
  <path d="M964 726h6v7h-6v8h6v7M974 737h8M979 733l4 4-4 4M974 733v12h6" stroke="#c6c6c6"/>
  <rect x="964" y="757" width="24" height="22" fill="#e1e1e1" stroke="#d2d2d2"/><path d="M964 764h24M964 771h24M972 757v22M980 757v22" stroke="#cfcfcf"/>
  <path d="M964 790h6v7h-6v8h6v7M974 801h8M979 797l4 4-4 4M974 797v12h6" stroke="#c6c6c6"/>
  <path d="M965 822h19l4 4v18h-23zM969 822v7h12v-7M969 844v-9h15v9" stroke="#b5b5b5"/>
  <path d="M967 855h-3v22h3M985 855h3v22h-3" stroke="#d9a03a" stroke-width="1.400"/>
  <path d="M966 866c4-7 16-7 20 0c-4 7-16 7-20 0z" stroke="#111" fill="#fff"/><circle cx="976" cy="866" r="3.300" fill="#111" stroke="none"/>
  <path d="M963 909l26-24" stroke="#111" stroke-width="1.300"/>
  <path d="M964 893c3-5 12-6 16-1M967 897a5 5 0 0 0 6 1" stroke="#111"/>
  <path d="M971 905c4-6 14-6 18 0c-4 6-14 6-18 0z" stroke="#111" fill="#fff"/><circle cx="980" cy="905" r="3" fill="#111" stroke="none"/>
  <path d="M965 932l7-12 6 1v9l10 4v6l-10 4z" fill="#e0e0e0" stroke="#cfcfcf"/><ellipse cx="977" cy="936" rx="4" ry="2" stroke="#c4c4c4"/>
  <path d="M964 948.500h26" stroke="#d9d9d9"/>
</svg>
<div class="a" style="left:965px;top:1083px;width:0;height:0;border-top:3.500px solid transparent;border-bottom:3.500px solid transparent;border-right:4px solid #111"></div>

<!-- resource bar -->
<div class="a" style="left:1416px;top:206px;width:32px;height:888px;background:#dddddd;border-left:1px solid #b9b9b9"></div>
<div class="a" style="left:1416px;top:375px;width:30px;height:43px;background:#fff"></div>
<svg style="left:1416px;top:206px" width="32" height="888" viewBox="1416 206 32 888" fill="none" stroke="#222" stroke-width="1.200" stroke-linejoin="round">
  <!-- gear -->
  <circle cx="1433" cy="219" r="5.500" stroke-width="1.800"/><circle cx="1433" cy="219" r="1" fill="#222"/>
  <path d="M1433 211v2M1433 225v2M1425 219h2M1439 219h2M1427.300 213.300l1.500 1.500M1437.200 223.200l1.500 1.500M1438.700 213.300l-1.500 1.500M1428.800 223.200l-1.500 1.500" stroke-width="2.200"/>
  <!-- part -->
  <path d="M1421 262L1428 257.500L1437.500 259.500V267L1431 271V276.500L1425.500 279.500L1421 277.500z" fill="#e4e4e4" stroke="#3a3a3a" stroke-width="1.100"/>
  <path d="M1421 262L1425.500 264L1431 261.500L1437.500 259.500M1425.500 264V279.500M1431 261.500V271M1421 270L1425.500 272L1431 269.500" stroke="#5a5a5a" stroke-width=".9"/>
  <path d="M1425.500 264L1431 261.500V269.500L1425.500 272z" fill="#c9c9c9" stroke="none"/>
  <!-- assembly -->
  <path d="M1425 302.500L1430.500 299.500L1436 301.500V309.500L1430 312.500z" fill="#dcdcdc" stroke="#555" stroke-width=".9"/>
  <path d="M1418.500 313L1424 315.500L1429.500 312.500V318.500L1424 321.500L1418.500 319z" fill="#ececec" stroke="#4a5a7a" stroke-width=".9"/>
  <path d="M1418.500 305.500L1423.500 302L1429.500 304V312.500L1424 315.500L1418.500 313z" fill="#f2841a" stroke="#a04c00" stroke-width=".8"/>
  <path d="M1418.500 305.500L1424 307.500L1429.500 304" stroke="#ffc07a" stroke-width="1"/>
  <path d="M1428.500 309.500L1441 321V309.500L1428.500 321z" fill="#fff" stroke="#111" stroke-width="1.200"/>
  <!-- bracket -->
  <path d="M1418.500 356L1426 344.500C1428 342 1432 342 1433 345V352L1441 356.500C1442.500 358 1442 360 1440 361L1432 364.500C1430 365 1428 365 1426 364L1419.500 360C1418 359 1418 357.500 1418.500 356z" fill="#c6c6c6" stroke="#3a3a3a" stroke-width="1.100"/>
  <path d="M1420 358L1427.500 347.500C1429 346 1431 346.500 1431 348.500V354L1439 358.500" stroke="#6a6a6a" stroke-width=".9"/>
  <ellipse cx="1431" cy="359.500" rx="4.200" ry="2.400" fill="#9a9a9a" stroke="#3a3a3a" stroke-width=".9"/>
  <!-- op nav (active) -->
  <path d="M1421 384h4.500v9l-2.200 3-2.300-3z" fill="#2d7ad8" stroke="#1a4fa0" stroke-width=".8"/>
  <path d="M1427.500 386.500h7l-2 1.500h-5M1427.500 390h5" stroke="#2a62c0" stroke-width="1.200"/>
  <path d="M1431 393.500h9" stroke="#111" stroke-width="1.200"/>
  <path d="M1423.500 396v11M1423.500 402.500h5" stroke="#111" stroke-width="1.200"/>
  <path d="M1431.500 399.500v5.500h6v-3h-3v-2.500z" stroke="#444" stroke-width="1" fill="#fff"/>
  <!-- machine -->
  <path d="M1421 428h14v14h-14zM1424 431h6v8h-6z" fill="#dcdcdc" stroke="#333"/><path d="M1436 432h6v3h-3v4h3v3h-6" stroke="#333" stroke-width="1.500"/>
  <path d="M1432 423l5-3 5 2v5l-5 3-5-2z" fill="#f3a455" stroke="#b15a0a" stroke-width=".8"/>
  <!-- bracket2 -->
  <path d="M1421 482l8-10 5 2v7l8 4v5l-9 4-12-6z" fill="#c4c4c4" stroke="#444"/><ellipse cx="1431" cy="487" rx="3.500" ry="2" stroke="#444"/>
  <path d="M1435 466v8M1438 468l6 6M1444 468l-6 6" stroke="#e08a2a" stroke-width="1"/>
  <!-- roller -->
  <path d="M1421 521l8-6 10 4v6l-8 7-10-5z" fill="#e2e2e2" stroke="#333"/><circle cx="1440" cy="525" r="4.500" fill="#fff" stroke="#222"/>
  <path d="M1421 514v-5M1421 511h14M1435 509v4" stroke="#e08a2a" stroke-width="1"/>
  <!-- blue nodes -->
  <g stroke="#1a2cc0" stroke-width="1.300" fill="#1a2cc0"><path d="M1423 556v20M1441 556v20" fill="none"/><rect x="1421" y="557" width="4" height="3"/><rect x="1421" y="570" width="4" height="3"/><rect x="1439" y="557" width="4" height="3"/><rect x="1439" y="570" width="4" height="3"/><path d="M1426 565h4M1436 565h4" fill="none"/></g>
  <path d="M1429 560l5 5-5 5zM1437 560v10l-3-5z" fill="#e85a1a" stroke="none"/>
  <!-- grid -->
  <path d="M1420 600l14-5 8 3v10l-14 6-8-4z" fill="#fff" stroke="#9a6ab0" stroke-width=".8"/><path d="M1420 604l14-5 8 3M1420 608l14-5M1425 598v12M1430 596v13M1434 595v12" stroke="#a070c0" stroke-width=".7"/>
  <path d="M1428 608l10-3 6 2v6l-10 4-6-3z" fill="#f29a2a" stroke="#9a5500" stroke-width=".8"/><path d="M1438 617v-6l6-4v6z" fill="#2a6fe0" stroke="none"/>
  <!-- info -->
  <circle cx="1428" cy="662" r="8.500" fill="#8a8a8a" stroke="#555"/><path d="M1428 658v.5M1428 661v6" stroke="#e8e8e8" stroke-width="1.800"/><path d="M1434 650a12 12 0 0 1 8 10M1437 647a16 16 0 0 1 8 12" stroke="#b5b5b5" stroke-width="1"/>
  <!-- web -->
  <rect x="1418.500" y="703.500" width="23" height="22" fill="#f4f4f4" stroke="#333"/><path d="M1418.500 707.500h23" stroke="#333"/><circle cx="1430" cy="716.500" r="7" fill="#2e8fd0" stroke="#14507a" stroke-width=".9"/><path d="M1426 713l3 2 1 4 3-2 2 3" stroke="#bfe6ff" stroke-width="1.200"/>
  <!-- clock -->
  <circle cx="1430" cy="768" r="11" fill="#ececec" stroke="#333"/><path d="M1430 760v8h-7" stroke="#333" stroke-width="1.300"/><path d="M1430 758v1.500M1430 776.500v1.500M1420 768h1.500M1438.500 768h1.500" stroke="#333"/>
  <!-- color -->
  <defs><linearGradient id="rb" x1="0" y1="0" x2="0" y2="1"><stop offset="0" stop-color="#f01818"/><stop offset=".3" stop-color="#f0e018"/><stop offset=".6" stop-color="#18d838"/><stop offset="1" stop-color="#1838f0"/></linearGradient></defs>
  <rect x="1420" y="798" width="8" height="23" fill="url(#rb)" stroke="none"/><path d="M1430 802l8 14 3 4" stroke="#111" stroke-width="2.600"/><circle cx="1430" cy="801" r="1.800" fill="#f4f4f4" stroke="none"/>
  <!-- blue tool -->
  <path d="M1422 846v12l2 4 3-3v-13z" fill="#2a7fe0" stroke="#1a4a98" stroke-width=".8"/><path d="M1428 848h14l-8 4M1428 853l8 2" stroke="#2a6fd0" stroke-width="1.200"/><path d="M1432 850l6 10 2 3" stroke="#111" stroke-width="2.200"/>
  <!-- tools -->
  <path d="M1419.500 885.500h5v-3h6v3h11v19h-22z" fill="#fff" stroke="#222"/><path d="M1423 901l13-12M1436 901l-12-12M1422 890l4-3M1434 887a3 3 0 0 1 4 4" stroke="#222" stroke-width="1.800"/>
  <!-- machine2 -->
  <path d="M1420 930h14v14h-14zM1423 933h6v8h-6z" fill="#dcdcdc" stroke="#222"/><path d="M1435 934h6v3h-3v4h3v3h-6" stroke="#222" stroke-width="1.500"/><path d="M1431 926l5-4h6l2 3-3 5h-8z" fill="#f0e060" stroke="#a89a20" stroke-width=".8"/>
</svg>
<!-- navigator -->
<div class="a" style="left:1005px;top:235px;width:405px;height:22px;background:#f0f0f0;border-top:1px solid #dcdcdc;border-bottom:1px solid #d4d4d4"></div>
<div class="a" style="left:1005px;top:276px;width:386px;height:20px;background:#f8f8f8"></div>
<div class="a" style="left:1005px;top:316px;width:386px;height:20px;background:#f8f8f8"></div>
<div class="a" style="left:1005px;top:356px;width:386px;height:20px;background:#f8f8f8"></div>
<div class="a" style="left:1005px;top:396px;width:386px;height:20px;background:#f8f8f8"></div>
<div class="a" style="left:1005px;top:436px;width:386px;height:20px;background:#f8f8f8"></div>
<div class="a" style="left:1005px;top:476px;width:386px;height:20px;background:#f8f8f8"></div>
<div class="a" style="left:1005px;top:516px;width:386px;height:20px;background:#f8f8f8"></div>
<div class="a" style="left:1005px;top:556px;width:386px;height:20px;background:#f8f8f8"></div>
<div class="a" style="left:1005px;top:596px;width:386px;height:20px;background:#f8f8f8"></div>
<div class="a" style="left:1005px;top:636px;width:386px;height:20px;background:#f8f8f8"></div>
<div class="a" style="left:1005px;top:676px;width:386px;height:20px;background:#f8f8f8"></div>
<div class="a" style="left:1005px;top:716px;width:386px;height:20px;background:#f8f8f8"></div>
<div class="a" style="left:1005px;top:756px;width:386px;height:20px;background:#f8f8f8"></div>
<div class="a" style="left:1005px;top:796px;width:386px;height:20px;background:#f8f8f8"></div>
<div class="a" style="left:1005px;top:836px;width:386px;height:20px;background:#f8f8f8"></div>
<div class="a" style="left:1005px;top:876px;width:386px;height:20px;background:#f8f8f8"></div>
<div class="a" style="left:1005px;top:916px;width:386px;height:20px;background:#f8f8f8"></div>
<div class="a" style="left:1005px;top:956px;width:386px;height:20px;background:#f8f8f8"></div>
<div class="a" style="left:1005px;top:996px;width:386px;height:20px;background:#f8f8f8"></div>
<div class="a" style="left:1391px;top:257px;width:19px;height:760px;background:#f3f3f3"></div>
<div class="a" style="left:1005px;top:397px;width:386px;height:19px;background:#8dc0d3"></div>
<div class="hs" style="left:1005px;top:276px;width:386px;background:#e9e9e9"></div>
<div class="hs" style="left:1005px;top:296px;width:386px;background:#e9e9e9"></div>
<div class="hs" style="left:1005px;top:316px;width:386px;background:#e9e9e9"></div>
<div class="hs" style="left:1005px;top:336px;width:386px;background:#e9e9e9"></div>
<div class="hs" style="left:1005px;top:356px;width:386px;background:#e9e9e9"></div>
<div class="hs" style="left:1005px;top:376px;width:386px;background:#e9e9e9"></div>
<div class="hs" style="left:1005px;top:396px;width:386px;background:#e9e9e9"></div>
<div class="hs" style="left:1005px;top:416px;width:386px;background:#e9e9e9"></div>
<div class="hs" style="left:1005px;top:436px;width:386px;background:#e9e9e9"></div>
<div class="hs" style="left:1005px;top:456px;width:386px;background:#e9e9e9"></div>
<div class="hs" style="left:1005px;top:476px;width:386px;background:#e9e9e9"></div>
<div class="hs" style="left:1005px;top:496px;width:386px;background:#e9e9e9"></div>
<div class="hs" style="left:1005px;top:516px;width:386px;background:#e9e9e9"></div>
<div class="hs" style="left:1005px;top:536px;width:386px;background:#e9e9e9"></div>
<div class="hs" style="left:1005px;top:556px;width:386px;background:#e9e9e9"></div>
<div class="hs" style="left:1005px;top:576px;width:386px;background:#e9e9e9"></div>
<div class="hs" style="left:1005px;top:596px;width:386px;background:#e9e9e9"></div>
<div class="hs" style="left:1005px;top:616px;width:386px;background:#e9e9e9"></div>
<div class="hs" style="left:1005px;top:636px;width:386px;background:#e9e9e9"></div>
<div class="hs" style="left:1005px;top:656px;width:386px;background:#e9e9e9"></div>
<div class="hs" style="left:1005px;top:676px;width:386px;background:#e9e9e9"></div>
<div class="hs" style="left:1005px;top:696px;width:386px;background:#e9e9e9"></div>
<div class="hs" style="left:1005px;top:716px;width:386px;background:#e9e9e9"></div>
<div class="hs" style="left:1005px;top:736px;width:386px;background:#e9e9e9"></div>
<div class="hs" style="left:1005px;top:756px;width:386px;background:#e9e9e9"></div>
<div class="hs" style="left:1005px;top:776px;width:386px;background:#e9e9e9"></div>
<div class="hs" style="left:1005px;top:796px;width:386px;background:#e9e9e9"></div>
<div class="hs" style="left:1005px;top:816px;width:386px;background:#e9e9e9"></div>
<div class="hs" style="left:1005px;top:836px;width:386px;background:#e9e9e9"></div>
<div class="hs" style="left:1005px;top:856px;width:386px;background:#e9e9e9"></div>
<div class="hs" style="left:1005px;top:876px;width:386px;background:#e9e9e9"></div>
<div class="hs" style="left:1005px;top:896px;width:386px;background:#e9e9e9"></div>
<div class="hs" style="left:1005px;top:916px;width:386px;background:#e9e9e9"></div>
<div class="hs" style="left:1005px;top:936px;width:386px;background:#e9e9e9"></div>
<div class="hs" style="left:1005px;top:956px;width:386px;background:#e9e9e9"></div>
<div class="hs" style="left:1005px;top:976px;width:386px;background:#e9e9e9"></div>
<div class="hs" style="left:1005px;top:996px;width:386px;background:#e9e9e9"></div>
<div class="vs" style="left:1245px;top:236px;height:781px;background:#e2e2e2"></div>
<div class="vs" style="left:1283px;top:236px;height:781px;background:#e2e2e2"></div>
<div class="vs" style="left:1352px;top:236px;height:781px;background:#e2e2e2"></div>
<div class="vs" style="left:1388px;top:236px;height:781px;background:#e2e2e2"></div>
<div class="a" style="left:1205px;top:257px;width:1px;height:760px;background:#1a1a1a"></div>
<div class="vs" style="left:1205px;top:236px;height:21px;background:#d0d0d0"></div>
<div class="t" style="left:1212px;top:241.500px;font-size:12px;color:#222">换刀</div>
<div class="t" style="left:1251px;top:241.500px;font-size:12px;color:#222">刀轨</div>
<div class="t" style="left:1290px;top:241.500px;font-size:12px;color:#222">刀具</div>
<div class="t" style="left:1358px;top:241.500px;font-size:12px;color:#222">刀...</div>
<div class="t" style="left:1394px;top:241.500px;font-size:12px;color:#222">时</div>
<div class="a" style="left:1399px;top:274px;width:2px;height:142px;background:#8a8a8a"></div>
<div class="a" style="left:1005px;top:1017px;width:405px;height:20px;background:#f0f0f0"></div>
<div class="a" style="left:1023px;top:1025px;width:160px;height:2px;background:#8a8a8a"></div>
<div class="a" style="left:1004px;top:1037px;width:406px;height:3px;background:#c9c9c9;border-top:1px solid #b5b5b5"></div>
<div class="a" style="left:1014px;top:1049px;width:0;height:0;border-top:4.500px solid transparent;border-bottom:4.500px solid transparent;border-left:5.500px solid #154f66"></div>
<div class="t" style="left:1028px;top:1047px;font-size:14px;color:#1e5468">相关性</div>
<div class="a" style="left:1004px;top:1063px;width:406px;height:2px;background:#d2d2d2"></div>
<div class="a" style="left:1014px;top:1073px;width:0;height:0;border-top:4.500px solid transparent;border-bottom:4.500px solid transparent;border-left:5.500px solid #154f66"></div>
<div class="t" style="left:1028px;top:1071px;font-size:14px;color:#1e5468">细节</div>
<div class="a" style="left:1004px;top:1087px;width:406px;height:2px;background:#d2d2d2"></div>
<svg style="left:1005px;top:235px" width="405" height="782" viewBox="1005 235 405 782" fill="none">
<defs>
<g id="chk"><path d="M0 7l4.400 5L13 0.500" stroke="#3fd155" stroke-width="2.100" fill="none" stroke-linecap="round" stroke-linejoin="round"/></g>
<g id="fld"><path d="M.8 13.600V.6h4.200l1.500 2h8.200v11z" fill="url(#fg)" stroke="#344349" stroke-width="1.300"/><rect x="6.500" y="4.500" width="6.500" height="7.500" fill="#38b6d8" stroke="none"/><path d="M8 6.300h5M8 8.300h5M8 10.300h5" stroke="#e4f7fd" stroke-width="1"/></g>
<linearGradient id="fg" x1="0" y1="0" x2="1" y2="1"><stop offset="0" stop-color="#ffffff"/><stop offset="1" stop-color="#b9d7e6"/></linearGradient>
<g id="no"><circle cx="7" cy="7" r="5.800" stroke="#b8142c" stroke-width="2.300" fill="#fff"/><path d="M3 11L11 3" stroke="#b8142c" stroke-width="2.300"/></g>
<g id="tl"><rect x="0" y="0" width="6" height="14" fill="#9a9a9a" stroke="#333" stroke-width="1"/><path d="M1 12l4-8M1 7l3-5" stroke="#e0e0e0" stroke-width="1"/></g>
</defs>
<path d="M1015.500 577V1017" stroke="#9a9a9a" stroke-width="1" stroke-dasharray="1 2"/>
<path d="M1034.500 577V787" stroke="#9a9a9a" stroke-width="1" stroke-dasharray="1 2"/>
<path d="M1034.500 827V1017" stroke="#9a9a9a" stroke-width="1" stroke-dasharray="1 2"/>
<use href="#fld" x="1060" y="580"/>
<path d="M1051.500 580v9" stroke="#f0d060" stroke-width="1.500" stroke-dasharray="3 2"/>
<path d="M1036 607.5h8" stroke="#9a9a9a" stroke-dasharray="1 2"/>
<use href="#chk" x="1045.500" y="600"/>
<use href="#fld" x="1060" y="600"/>
<path d="M1036 627.5h8" stroke="#9a9a9a" stroke-dasharray="1 2"/>
<use href="#no" x="1045" y="620"/>
<use href="#fld" x="1060" y="620"/>
<rect x="1030.500" y="622.500" width="8" height="8" fill="#fff" stroke="#c8c8c8"/><path d="M1032.500 626.500h4" stroke="#222"/>
<path d="M1053.500 635v12h10" stroke="#9a9a9a" stroke-dasharray="1 2"/>
<use href="#no" x="1064" y="640"/>
<path d="M1082.500 646l6-4 7 3.500v5l-6 3.500-7-3.500z" fill="#dcdcdc" stroke="#4a4a4a" stroke-width=".9"/><path d="M1085 646.500l3.500-2 4 2-3.500 2zM1088.500 649v4.500M1082.500 646l6.500 3.500 6.500-3.500" fill="#f6f6f6" stroke="#4a4a4a" stroke-width=".8"/><path d="M1081 639.500v8" stroke="#3a55d8" stroke-width="2.600" stroke-dasharray="2 1"/>
<path d="M1036 667.5h8" stroke="#9a9a9a" stroke-dasharray="1 2"/>
<use href="#chk" x="1045.500" y="660"/>
<use href="#fld" x="1060" y="660"/>
<path d="M1036 687.5h8" stroke="#9a9a9a" stroke-dasharray="1 2"/>
<use href="#chk" x="1045.500" y="680"/>
<use href="#fld" x="1060" y="680"/>
<path d="M1036 707.5h8" stroke="#9a9a9a" stroke-dasharray="1 2"/>
<use href="#chk" x="1045.500" y="700"/>
<use href="#fld" x="1060" y="700"/>
<path d="M1036 727.5h8" stroke="#9a9a9a" stroke-dasharray="1 2"/>
<use href="#chk" x="1045.500" y="720"/>
<use href="#fld" x="1060" y="720"/>
<path d="M1036 747.5h8" stroke="#9a9a9a" stroke-dasharray="1 2"/>
<use href="#chk" x="1045.500" y="740"/>
<use href="#fld" x="1060" y="740"/>
<path d="M1036 767.5h8" stroke="#9a9a9a" stroke-dasharray="1 2"/>
<use href="#chk" x="1045.500" y="760"/>
<use href="#fld" x="1060" y="760"/>
<path d="M1036 787.5h8" stroke="#9a9a9a" stroke-dasharray="1 2"/>
<use href="#chk" x="1045.500" y="780"/>
<use href="#fld" x="1060" y="780"/>
<rect x="1011.500" y="802.500" width="8" height="8" fill="#fff" stroke="#c8c8c8"/><path d="M1013.500 806.500h4" stroke="#222"/>
<path d="M1020 806.500h12" stroke="#9a9a9a" stroke-dasharray="1 2"/>
<path d="M1033 799v16" stroke="#f2b250" stroke-width="1.600"/>
<use href="#fld" x="1041" y="800"/>
<path d="M1036 827.5h8" stroke="#9a9a9a" stroke-dasharray="1 2"/>
<use href="#chk" x="1045.500" y="820"/>
<use href="#fld" x="1060" y="820"/>
<path d="M1036 847.5h8" stroke="#9a9a9a" stroke-dasharray="1 2"/>
<use href="#chk" x="1045.500" y="840"/>
<use href="#fld" x="1060" y="840"/>
<path d="M1036 867.5h8" stroke="#9a9a9a" stroke-dasharray="1 2"/>
<use href="#chk" x="1045.500" y="860"/>
<use href="#fld" x="1060" y="860"/>
<path d="M1036 887.5h8" stroke="#9a9a9a" stroke-dasharray="1 2"/>
<use href="#chk" x="1045.500" y="880"/>
<use href="#fld" x="1060" y="880"/>
<path d="M1036 907.5h8" stroke="#9a9a9a" stroke-dasharray="1 2"/>
<use href="#chk" x="1045.500" y="900"/>
<use href="#fld" x="1060" y="900"/>
<path d="M1036 927.5h8" stroke="#9a9a9a" stroke-dasharray="1 2"/>
<use href="#chk" x="1045.500" y="920"/>
<use href="#fld" x="1060" y="920"/>
<path d="M1036 947.5h8" stroke="#9a9a9a" stroke-dasharray="1 2"/>
<use href="#chk" x="1045.500" y="940"/>
<use href="#fld" x="1060" y="940"/>
<path d="M1036 967.5h8" stroke="#9a9a9a" stroke-dasharray="1 2"/>
<use href="#chk" x="1045.500" y="960"/>
<use href="#fld" x="1060" y="960"/>
<path d="M1036 987.5h8" stroke="#9a9a9a" stroke-dasharray="1 2"/>
<use href="#chk" x="1045.500" y="980"/>
<use href="#fld" x="1060" y="980"/>
<path d="M1036 1007.5h8" stroke="#9a9a9a" stroke-dasharray="1 2"/>
<use href="#chk" x="1045.500" y="1000"/>
<use href="#fld" x="1060" y="1000"/>
<use href="#tl" x="1214.500" y="360"/><use href="#chk" x="1251.500" y="360"/>
<use href="#tl" x="1214.500" y="400"/><use href="#chk" x="1251.500" y="400"/>
<path d="M1251.500 640.500l13 13M1264.500 640.500l-13 13" stroke="#333" stroke-width="1.300"/>
</svg>
<div class="t" style="left:1079px;top:581px;font-size:12px;color:#111">A11</div>
<div class="t" style="left:1079px;top:601px;font-size:12px;color:#111">A12</div>
<div class="t" style="left:1079px;top:621px;font-size:12px;color:#111">A13</div>
<div class="t" style="left:1098px;top:641px;font-size:12px;color:#8aa8a0">底壁铣</div>
<div class="t" style="left:1079px;top:661px;font-size:12px;color:#111">A14</div>
<div class="t" style="left:1079px;top:681px;font-size:12px;color:#111">A15</div>
<div class="t" style="left:1079px;top:701px;font-size:12px;color:#111">A16</div>
<div class="t" style="left:1079px;top:721px;font-size:12px;color:#111">A17</div>
<div class="t" style="left:1079px;top:741px;font-size:12px;color:#111">A18</div>
<div class="t" style="left:1079px;top:761px;font-size:12px;color:#111">A19</div>
<div class="t" style="left:1079px;top:781px;font-size:12px;color:#111">A20</div>
<div class="t" style="left:1060px;top:801px;font-size:12px;color:#111">B</div>
<div class="t" style="left:1079px;top:821px;font-size:12px;color:#111">B01</div>
<div class="t" style="left:1079px;top:841px;font-size:12px;color:#111">B02</div>
<div class="t" style="left:1079px;top:861px;font-size:12px;color:#111">B03</div>
<div class="t" style="left:1079px;top:881px;font-size:12px;color:#111">B04</div>
<div class="t" style="left:1079px;top:901px;font-size:12px;color:#111">B05</div>
<div class="t" style="left:1079px;top:921px;font-size:12px;color:#111">B06</div>
<div class="t" style="left:1079px;top:941px;font-size:12px;color:#111">B07</div>
<div class="t" style="left:1079px;top:961px;font-size:12px;color:#111">B08</div>
<div class="t" style="left:1079px;top:981px;font-size:12px;color:#111">B09</div>
<div class="t" style="left:1079px;top:1001px;font-size:12px;color:#111">B10</div>
<div class="t" style="left:1288px;top:361px;font-size:12.500px;color:#a99fd6">D10</div>
<div class="t" style="left:1357px;top:361px;font-size:12.500px;color:#a99fd6">10</div>
<div class="t" style="left:1288px;top:401px;font-size:12.500px;color:#111;font-weight:bold">D17</div>
<div class="t" style="left:1357px;top:401px;font-size:12.500px;color:#111;font-weight:bold">10</div>
<div class="t" style="left:1288px;top:641px;font-size:11px;color:#c4c4c4;letter-spacing:1px">---</div>
<div class="t" style="left:1357px;top:641px;font-size:12px;color:#c4c4c4">0</div>
<!-- dialog -->
<div class="a" id="dlg" style="left:870px;top:26px;width:328px;height:561px;background:#f0f0f0;box-shadow:0 0 2px rgba(0,0,0,.3)">
  <div class="a" style="left:0;top:-1px;width:328px;height:24px;background:#0a628b"></div>
  <svg style="left:6px;top:3px" width="18" height="18" viewBox="0 0 18 18" fill="none" stroke="#fff">
    <circle cx="8.500" cy="8.500" r="3.900" stroke-width="3.400"/>
    <path d="M8.500 1.300v2.200M8.500 13.500v2.200M1.300 8.500h2.200M13.500 8.500h2.200M3.400 3.400l1.600 1.600M12 12l1.600 1.600M13.600 3.400L12 5M5 12l-1.600 1.600" stroke-width="2.400"/>
  </svg>
  <div class="t w" style="left:29px;top:6px;font-size:13.500px">切削参数</div>
  <div class="t w" style="left:284px;top:4px;font-size:15px;font-weight:bold">?</div>
  <svg style="left:305px;top:5px" width="14" height="14" viewBox="0 0 14 14" stroke="#fff" stroke-width="2" fill="none"><path d="M2 2l10 10M12 2L2 12"/></svg>

  <!-- tabs -->
  <div class="a tab" style="left:12px;top:33px;width:98px;height:29px">连接</div>
  <div class="a tab" style="left:109px;top:33px;width:110px;height:29px">空间范围</div>
  <div class="a tab" style="left:218px;top:33px;width:98px;height:29px">更多</div>
  <div class="a tab" style="left:12px;top:61px;width:102px;height:29px">策略</div>
  <div class="a tab" style="left:113px;top:61px;width:101px;height:29px">余量</div>
  <!-- content panel -->
  <div class="a" style="left:10px;top:89px;width:308px;height:409px;background:#fff;border:1px solid #c9c9c9"></div>
  <div class="a tab" style="left:213px;top:59px;width:105px;height:32px;background:#fff;border-bottom:none;color:#1b6e8e;line-height:30px">拐角</div>

  <!-- section 1 -->
  <div class="tri" style="left:23px;top:103px"></div>
  <div class="t" style="left:39px;top:98px;font-size:14px;color:#1b6e8e">拐角处的刀轨形状</div>
  <div class="t" style="left:24px;top:129px">凸角</div>
  <div class="a cb" style="left:163px;top:123px;width:141px;height:24px"><span style="left:4px">延伸并修剪</span><i></i></div>
  <div class="t" style="left:24px;top:156px">光顺</div>
  <div class="a cb" style="left:163px;top:149px;width:141px;height:25px"><b></b><span style="left:4px">所有刀路</span><i></i></div>
  <div class="t" style="left:24px;top:183px">半径</div>
  <div class="a cb" style="left:157px;top:177px;width:82px;height:23px"><span class="num" style="right:3px">1. 0000<u>0</u></span></div>
  <div class="a cb" style="left:241px;top:177px;width:63px;height:24px"><span style="left:5px;font-size:12px;letter-spacing:.5px">mm</span><i></i></div>
  <div class="t" style="left:24px;top:210px">步距限制</div>
  <div class="a cb" style="left:222px;top:204px;width:82px;height:22px"><span class="num" style="right:3px">150. 0000<u>0</u></span></div>
  <div class="hs" style="left:15px;top:235px;width:299px;background:#dcdcdc"></div>
  <!-- section 2 -->
  <div class="a" style="left:15px;top:238px;width:298px;height:24px;background:#a7d0e0"></div>
  <div class="tri" style="left:23px;top:248px;border-top-color:#222"></div>
  <div class="t" style="left:39px;top:244px;font-size:14px;color:#111">圆弧上进给调整</div>
  <div class="t" style="left:24px;top:275px">调整进给率</div>
  <div class="a cb" style="left:163px;top:268px;width:141px;height:25px"><span style="left:4px">无</span><i></i></div>
  <div class="hs" style="left:15px;top:301px;width:299px;background:#dcdcdc"></div>
  <!-- section 3 -->
  <div class="tri" style="left:23px;top:316px"></div>
  <div class="t" style="left:39px;top:311px;font-size:14px;color:#1b6e8e">拐角处进给减速</div>
  <div class="t" style="left:24px;top:342px">减速距离</div>
  <div class="a cb" style="left:163px;top:335px;width:141px;height:25px"><span style="left:4px">无</span><i></i></div>
  <div class="hs" style="left:15px;top:368px;width:299px;background:#dcdcdc"></div>

  <!-- footer -->
  <div class="a" style="left:159px;top:507px;width:0;height:0;border-left:4.500px solid transparent;border-right:4.500px solid transparent;border-bottom:5px solid #111"></div>
  <div class="hs" style="left:6px;top:516px;width:316px;background:#d6d6d6"></div>
  <div class="a" style="left:199px;top:525px;width:54px;height:25px;background:#036993;color:#fff;text-align:center;line-height:27px;font-size:12px">确定</div>
  <div class="a" style="left:258px;top:525px;width:54px;height:25px;background:#e4f2f9;border:1.500px solid #2a4f5e;color:#23505f;text-align:center;line-height:24px;font-size:12px">取消</div>
  <!-- cursor -->
  <svg style="left:64px;top:247px" width="20" height="34" viewBox="0 0 20 34" fill="#fff" stroke="#111" stroke-width="1.100" stroke-linejoin="round">
    <path d="M5.500 19V3a2 2 0 0 1 4 0V14h1.200a1.600 1.600 0 0 1 3 .5a1.600 1.600 0 0 1 2.800 .8a1.500 1.500 0 0 1 2.500 1.200V25c0 5-2 8-5 8H10c-2.500 0-4-2-5.500-4.500L1.500 22.500c-.8-2 1.500-3 3-1.500z"/>
    <path d="M9.500 14v5M12.700 14.500v4.500M15.500 15.300v4" fill="none"/>
  </svg>
</div>
<!-- bottom toolbar -->
<div class="hs" style="left:3px;top:1129px;width:1445px;background:#b5b5b5;height:1px"></div>
<svg style="left:3px;top:1094px" width="1445" height="35" viewBox="3 1094 1445 35" fill="none" stroke="#222" stroke-width="1.200" stroke-linejoin="round">
  <defs>
    <g id="ax"><path d="M0 0l7 10M7 10l8-6M7 10l9 6" stroke-width="1.200"/></g>
    <g id="lay"><path d="M0 4l9-4 9 4-9 4zM0 8l9 4 9-4M0 12l9 4 9-4"/></g>
    <g id="gcube"><path d="M0 5l9-5 9 4v10l-9 5-9-4zM0 5l9 4 9-5M9 9v10" fill="#ececec" stroke="#cfcfcf"/></g>
  </defs>
  <!-- ruler -->
  <path d="M13 1119l19-18 4 4-19 18z" fill="#fff" stroke="#222"/><path d="M18 1116l2 2M21 1113l3 3M24 1110l2 2M27 1107l3 3M30 1104l2 2" stroke="#222" stroke-width="1"/>
  <!-- window+ruler -->
  <rect x="47.500" y="1100.500" width="20" height="17" fill="#fff" stroke="#222"/><path d="M47.500 1103.500h20" stroke="#222"/><path d="M52 1110l3-3 3 3-3 3zM59 1110l3-3 3 3-3 3z" fill="#f09a28" stroke="#b86200" stroke-width=".7"/>
  <path d="M57 1123l12-11 3 3-12 11z" fill="#fff" stroke="#222"/>
  <rect x="79.500" y="1100.500" width="20" height="17" fill="#fff" stroke="#222"/><path d="M79.500 1103.500h20" stroke="#222"/><path d="M84 1110l3-3 3 3-3 3zM91 1110l3-3 3 3-3 3z" fill="#f09a28" stroke="#b86200" stroke-width=".7"/>
  <path d="M85 1125a9 9 0 0 1 18 0zM90 1125a4 4 0 0 1 8 0" fill="#fff" stroke="#222"/>
  <!-- gray sheet -->
  <path d="M113 1113l8-12 10 3 5 8-9 10z" fill="#dcdcdc" stroke="#cfcfcf"/><path d="M126 1122a10 10 0 0 1 10-10v10zM128 1120l5-5M130 1115h3v3" stroke="#c2c2c2" fill="#fff"/>
  <!-- + i -->
  <path d="M149 1098v9M144.500 1102.500h9" stroke="#1b8a7a" stroke-width="1.300"/><circle cx="161" cy="1118" r="5.500" stroke="#222"/><path d="M161 1115v.5M161 1117v4" stroke="#222" stroke-width="1.200"/>
  <!-- MIN -->
  <path d="M177 1114c4-2 7-14 11-16s9 4 12 8l-4 8z" fill="#f29a30" stroke="#c47010" stroke-width=".8"/><rect x="185.500" y="1107.500" width="16" height="16" fill="#fff" stroke="#222"/><path d="M193 1114l5-4M195 1109.500h3.500v3.500" stroke="#222" stroke-width="1.100"/>
  <!-- axes cube -->
  <path d="M210 1103l6 10" stroke="#3aa83a"/><path d="M216 1113l8-5" stroke="#3aa83a"/><path d="M216 1113l6 5" stroke="#d03030"/>
  <path d="M218 1112l8-4 9 3v7l-9 5-8-4z" fill="#8f8f8f" stroke="#222"/><path d="M218 1112l8 3 9-4M226 1115v8" stroke="#222"/>
  <!-- axes move -->
  <path d="M244 1101l7 12" stroke="#3aa83a"/><path d="M251 1113l8-6" stroke="#3aa83a"/><path d="M251 1113l6 5" stroke="#d03030"/>
  <path d="M260 1110v16M252 1118h16M258 1112l2-2 2 2M258 1124l2 2 2-2M254 1116l-2 2 2 2M266 1116l2 2-2 2" stroke="#222" stroke-width="1.100"/>
  <!-- axes dot -->
  <path d="M281 1102l6 11" stroke="#3aa83a"/><path d="M287 1113l9-7" stroke="#3aa83a"/><path d="M287 1113l8 7" stroke="#d03030"/><circle cx="286" cy="1113" r="2.500" fill="#f08a20" stroke="none"/>
  <!-- gray triad -->
  <path d="M321 1105v10l-7 6M321 1115l7 6" stroke="#d0d0d0"/><circle cx="321" cy="1103" r="2" stroke="#d0d0d0"/><circle cx="312" cy="1122" r="2" stroke="#d0d0d0"/><circle cx="330" cy="1122" r="2" stroke="#d0d0d0"/>
  <!-- axes save -->
  <path d="M343 1101l7 12" stroke="#3aa83a"/><path d="M350 1113l6 4" stroke="#d03030"/>
  <path d="M354.500 1110.500h10l3 3v10h-13zM357 1110.500v4h7v-4M357 1123.500v-5h8v5" fill="#fff" stroke="#222" stroke-width="1.100"/>
  <!-- axes (000) -->
  <path d="M378 1101l6 12" stroke="#3aa83a"/><path d="M384 1113l7-5" stroke="#3aa83a"/><path d="M384 1113l7 6" stroke="#d03030"/>
  <!-- gray layers -->
  <use href="#lay" x="410" y="1100" stroke="#c9c9c9" fill="#f1f1f1"/><path d="M421.500 1114.500h6l3 3v7h-9z" fill="#fff" stroke="#bdbdbd"/>
  <use href="#lay" x="443" y="1100" stroke="#c9c9c9" fill="#f1f1f1"/><rect x="452.500" y="1111.500" width="13" height="13" fill="#fff" stroke="#c2c2c2"/><path d="M463 1114l-7 7M456 1116v5h5" stroke="#c2c2c2"/>
  <use href="#lay" x="475" y="1099" stroke="#222" fill="#d8d8d8"/><circle cx="491" cy="1118" r="4" fill="#fff" stroke="#222" stroke-width="1.600"/><path d="M491 1111.500v2M491 1122.500v2M484.500 1118h2M495.500 1118h2M486.500 1113.500l1.400 1.400M494.100 1121.100l1.400 1.400M495.500 1113.500l-1.400 1.400M487.900 1121.100l-1.400 1.400" stroke="#222" stroke-width="1.600"/>
  <!-- many gray icons -->
  <use href="#gcube" x="511" y="1102"/><ellipse cx="520" cy="1111" rx="5" ry="2.500" stroke="#cfcfcf"/>
  <rect x="540.500" y="1100.500" width="23" height="23" fill="#fff" stroke="#cfcfcf"/><rect x="545" y="1105" width="14" height="14" fill="#dcdcdc" stroke="none"/>
  <use href="#gcube" x="574" y="1101"/><rect x="586.500" y="1109.500" width="9" height="12" fill="#fff" stroke="#c6c6c6"/>
  <path d="M607 1108l16-6 6 10-15 8z" fill="#e4e4e4" stroke="#cfcfcf"/><path d="M609 1112c5 4 12 4 18-1" stroke="#cfcfcf"/>
  <path d="M641 1110l14-6 8 8-12 9z" fill="#e9e9e9" stroke="#d6d6d6"/>
  <rect x="672" y="1100" width="18" height="18" fill="#d9d9d9" stroke="none"/><path d="M688 1111v12M682 1117h12M686 1113l2-2 2 2M686 1121l2 2 2-2M684 1115l-2 2 2 2M692 1115l2 2-2 2" stroke="#9a9a9a" stroke-width="1"/>
  <path d="M711 1113l6-3 6 3v6l-6 3-6-3zM717 1101v9M706 1122l5-3M728 1122l-5-3" fill="#e4e4e4" stroke="#c6c6c6"/><path d="M715 1103l2-3 2 3" stroke="#c6c6c6"/>
  <path d="M738 1102l11 7 11-7v14l-11 8-11-8zM749 1109v15" fill="#dcdcdc" stroke="#c2c2c2"/>
  <path d="M781 1103v19h-6zM785 1103v19h6z" fill="#cfcfcf" stroke="#c2c2c2"/>
  <path d="M806 1113l10-10 8 6-10 11z" fill="#e4e4e4" stroke="#c9c9c9"/><path d="M804 1120l4-4M822 1102l4-2" stroke="#c9c9c9"/>
  <use href="#gcube" x="839" y="1101"/><path d="M848 1114h10l-2-2M858 1118h-10l2 2" stroke="#b5b5b5"/>
  <use href="#gcube" x="871" y="1101"/><path d="M884 1113l8 8M892 1113l-8 8" stroke="#b9b9b9" stroke-width="1.600"/>
  <path d="M906 1110l12-8 8 3c-4 5-6 10-6 17l-10-3c0-3-2-6-4-9z" fill="#e1e1e1" stroke="#cdcdcd"/>
  <use href="#gcube" x="938" y="1102"/>
  <use href="#gcube" x="973" y="1102"/><circle cx="988" cy="1117" r="3" fill="#dcdcdc" stroke="#c9c9c9"/>
  <path d="M1003 1113l14-8 8 4-14 9z" fill="#dedede" stroke="#c9c9c9"/><path d="M1003 1113v3l8 5 14-9v-3" stroke="#c2c2c2"/>
  <!-- colored ruler -->
  <path d="M1037.500 1099.500h6v20h14v6h-20z" fill="#f5df5a" stroke="#a8820a"/><path d="M1038 1103h3M1038 1107h3M1038 1111h3M1038 1115h3M1046 1122v3M1050 1122v3M1054 1122v3" stroke="#7a5a00" stroke-width=".8"/>
  <path d="M1044 1102l7-3 6 3-7 3z" fill="#e03030" stroke="#801010" stroke-width=".7"/><path d="M1044 1102v5l6 3 7-3v-5l-7 3z" fill="#2a4ad8" stroke="#101a80" stroke-width=".7"/><path d="M1044 1108v5l6 3 7-3v-5l-7 3z" fill="#28a848" stroke="#0a5a1a" stroke-width=".7"/>
  <!-- gray box dims -->
  <path d="M1069 1110l10-5 10 4v10l-10 5-10-4zM1069 1110l10 4 10-5M1079 1114v10" fill="#efefef" stroke="#cfcfcf"/><path d="M1072 1112v8M1075 1113v9M1083 1113v9M1086 1111v9" stroke="#d6d6d6" stroke-width=".8"/><path d="M1091 1106v14M1089 1106h4M1089 1120h4" stroke="#d0d0d0"/>
  <!-- kg -->
  <rect x="1102" y="1100" width="24" height="24" fill="#e0e0e0" stroke="none"/><path d="M1112 1122l3-10h5l4 10z" fill="#c9c9c9" stroke="#b5b5b5" stroke-width=".8"/>
  <!-- checkbox -->
  <rect x="1134.500" y="1105.500" width="12" height="12" rx="2.500" fill="#fff" stroke="#333"/>
  <!-- sphere -->
  <rect x="1154" y="1100" width="24" height="24" fill="#a9a9a9" stroke="none"/>
  <defs><radialGradient id="sph" cx=".4" cy=".35" r=".7"><stop offset="0" stop-color="#fafafa"/><stop offset=".6" stop-color="#c6c6c6"/><stop offset="1" stop-color="#3a3a3a"/></radialGradient></defs>
  <circle cx="1166" cy="1112" r="10" fill="url(#sph)" stroke="#222" stroke-width=".8"/><path d="M1156.500 1114c4 3 14 3 19 0" stroke="#111" stroke-width="1.400"/>
  <!-- cam -->
  <path d="M1191 1108h14v-5h4v5M1191 1108v13h7M1209 1103v6l-4 3" stroke="#c2c2c2"/><circle cx="1201" cy="1117" r="4.500" stroke="#c2c2c2"/><rect x="1195.500" y="1111.500" width="11" height="11" stroke="#cfcfcf"/>
  <path d="M1435.500 1116l3.500 4 3.500-4z" fill="#111" stroke="none"/>
</svg>
<div class="t" style="left:187px;top:1114px;font-size:6.500px;font-weight:bold;letter-spacing:.3px">MIN</div>
<div class="t" style="left:380px;top:1099px;font-size:8px;letter-spacing:-.8px;font-weight:bold">(0,0,0)</div>
<div class="t" style="left:1104px;top:1101px;font-size:9px;font-weight:bold;color:#b9b9b9">kg</div>
<div class="t" style="left:1220px;top:1107px;font-size:11px;color:#c9c9c9">删除组装</div>
<div class="vs" style="left:1272px;top:1098px;height:26px;background:#d9d9d9"></div>
<!-- status bar -->
<div class="t" style="left:6px;top:1135px;font-size:11px;font-weight:bold;color:#222">指定切削参数</div>
<div class="t" style="left:700px;top:1135px;font-size:11px;font-weight:bold;color:#222">当前：底壁铣_1_COPY</div>
</body>
</html>
